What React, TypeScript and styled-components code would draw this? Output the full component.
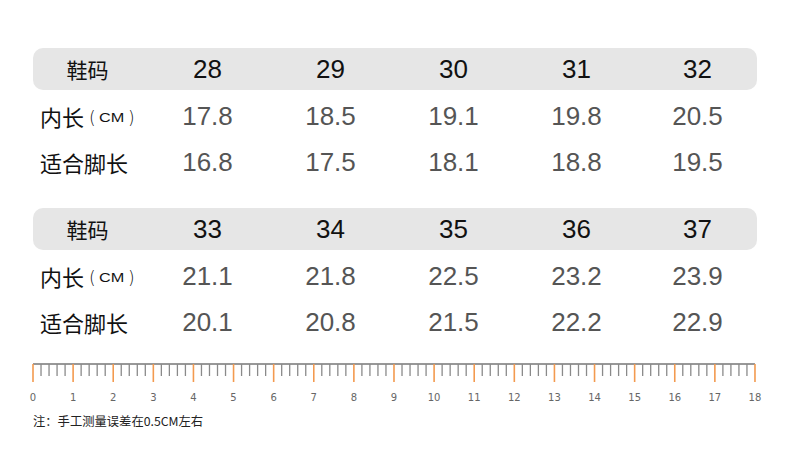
import React from 'react'
import styled, { createGlobalStyle } from 'styled-components'

const GlobalStyle = createGlobalStyle`
  html, body {
    margin: 0;
    padding: 0;
    background: #fff;
  }
  body {
    font-family: "Liberation Sans", "Noto Sans CJK SC", sans-serif;
  }
`

interface Table {
  sizes: number[]
  inner: string[]
  foot: string[]
}

const tables: Table[] = [
  {
    sizes: [28, 29, 30, 31, 32],
    inner: ['17.8', '18.5', '19.1', '19.8', '20.5'],
    foot: ['16.8', '17.5', '18.1', '18.8', '19.5'],
  },
  {
    sizes: [33, 34, 35, 36, 37],
    inner: ['21.1', '21.8', '22.5', '23.2', '23.9'],
    foot: ['20.1', '20.8', '21.5', '22.2', '22.9'],
  },
]

const STEP = 40.11
const OFFSET = 5

function Ruler() {
  const ticks = []
  for (let i = 0; i <= 90; i++) {
    const x = OFFSET + i * (STEP / 5)
    const major = i % 5 === 0
    ticks.push(
      <line
        key={'t' + i}
        x1={x}
        x2={x}
        y1={1}
        y2={major ? 19 : 13}
        stroke={major ? '#f39a4f' : '#8a8a8a'}
        strokeWidth={major ? 1.6 : 1.3}
      />
    )
    if (major) {
      ticks.push(
        <text key={'l' + i} x={x} y={38} textAnchor="middle" fontSize="10" fill="#666" fontFamily="'DejaVu Sans', sans-serif">
          {i / 5}
        </text>
      )
    }
  }
  return (
    <RulerSvg width={735} height={42} viewBox="0 0 735 42">
      <line x1={OFFSET} x2={OFFSET + 18 * STEP} y1={1} y2={1} stroke="#333" strokeWidth={1.2} />
      {ticks}
    </RulerSvg>
  )
}

export default function App() {
  return (
    <Page>
      <GlobalStyle />
      {tables.map((t, idx) => (
        <SizeTable key={idx} $first={idx === 0}>
          <HeaderRow>
            <HeadLabel>鞋码</HeadLabel>
            {t.sizes.map((s) => (
              <HeadCell key={s}>{s}</HeadCell>
            ))}
          </HeaderRow>
          <Row>
            <RowLabel>
              内长
              <Unit>
                <Paren>(</Paren>
                <UnitText>CM</UnitText>
                <Paren>)</Paren>
              </Unit>
            </RowLabel>
            {t.inner.map((v, i) => (
              <Cell key={i}>{v}</Cell>
            ))}
          </Row>
          <Row>
            <RowLabel>适合脚长</RowLabel>
            {t.foot.map((v, i) => (
              <Cell key={i}>{v}</Cell>
            ))}
          </Row>
        </SizeTable>
      ))}
      <RulerWrap>
        <Ruler />
      </RulerWrap>
      <Note>注：手工测量误差在0.5CM左右</Note>
    </Page>
  )
}

const Page = styled.div`
  width: 790px;
  height: 454px;
  padding: 48px 0 0 33px;
  box-sizing: border-box;
  overflow: hidden;
`

const SizeTable = styled.div<{ $first: boolean }>`
  width: 724px;
  margin-top: ${(p) => (p.$first ? '0' : '23px')};
`

const grid = `
  display: grid;
  grid-template-columns: 113px repeat(4, 123px) 119px;
  align-items: center;
`

const HeaderRow = styled.div`
  ${grid}
  height: 42px;
  background: #e6e6e6;
  border-radius: 10px;
`

const Row = styled.div`
  ${grid}
  height: 46px;
  &:nth-child(2) {
    margin-top: 3px;
  }
`

const HeadLabel = styled.div`
  text-align: center;
  font-family: "Noto Sans CJK SC", sans-serif;
  font-size: 21px;
  color: #111;
  padding-right: 4px;
`

const HeadCell = styled.div`
  text-align: center;
  font-size: 26px;
  color: #111;
`

const RowLabel = styled.div`
  padding-left: 7px;
  font-family: "Noto Sans CJK SC", sans-serif;
  font-size: 22px;
  color: #111;
  white-space: nowrap;
  display: flex;
  align-items: center;
`

const Unit = styled.span`
  display: flex;
  align-items: center;
  margin-top: 4px;
  margin-left: 5px;
`

const Paren = styled.span`
  font-family: "DejaVu Sans", sans-serif;
  font-size: 17px;
  font-weight: 300;
  line-height: 1;
  color: #111;
`

const UnitText = styled.span`
  display: inline-block;
  font-family: "Liberation Sans", sans-serif;
  font-size: 12.5px;
  line-height: 1;
  transform: scaleX(1.3);
  margin: 0 7px 0 6px;
`

const Cell = styled.div`
  text-align: center;
  font-size: 26px;
  color: #555;
`

const RulerWrap = styled.div`
  margin: 18px 0 0 -5px;
  height: 42px;
`

const RulerSvg = styled.svg`
  display: block;
`

const Note = styled.div`
  margin-top: 7px;
  font-family: "Noto Sans CJK SC", sans-serif;
  font-size: 12.3px;
  color: #222;
`
